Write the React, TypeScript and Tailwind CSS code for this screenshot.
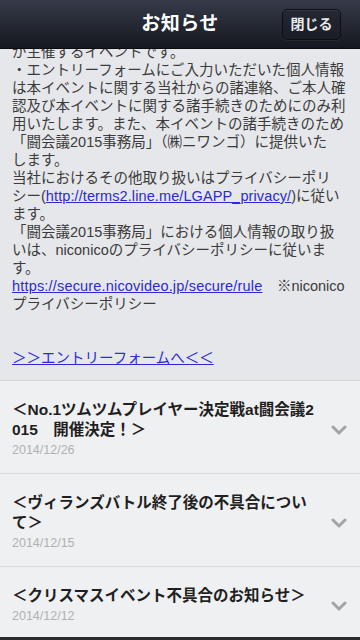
import React from 'react';

const jp = { fontFamily: '"Liberation Sans", "Noto Sans CJK JP", sans-serif' };

const bodyLines: React.ReactNode[] = [
  'が主催するイベントです。',
  '・エントリーフォームにご入力いただいた個人情報',
  'は本イベントに関する当社からの諸連絡、ご本人確',
  '認及び本イベントに関する諸手続きのためにのみ利',
  '用いたします。また、本イベントの諸手続きのため',
  '「闘会議2015事務局」（㈱ニワンゴ）に提供いた',
  'します。',
  '当社におけるその他取り扱いはプライバシーポリ',
  <>
    シー(<span className="text-[#2b2bd6] underline tracking-[0.1px]">http://terms2.line.me/LGAPP_privacy/</span>)に従い
  </>,
  'ます。',
  '「闘会議2015事務局」における個人情報の取り扱',
  'いは、niconicoのプライバシーポリシーに従いま',
  'す。',
  <>
    <span className="text-[#2b2bd6] underline tracking-[0.18px]">https://secure.nicovideo.jp/secure/rule</span>
    {'\u3000※niconico'}
  </>,
  'プライバシーポリシー',
  '\u00a0',
  '\u00a0',
  <span className="text-[#2b2bd6] underline">＞＞エントリーフォームへ＜＜</span>,
];

const notices = [
  { lines: ['＜No.1ツムツムプレイヤー決定戦at闘会議2', '015\u3000開催決定！＞'], date: '2014/12/26' },
  { lines: ['＜ヴィランズバトル終了後の不具合につい', 'て＞'], date: '2014/12/15' },
  { lines: ['＜クリスマスイベント不具合のお知らせ＞'], date: '2014/12/12' },
];

function Chevron() {
  return (
    <svg width="16" height="10" viewBox="0 0 16 10" className="shrink-0">
      <path d="M2 2 L8 8 L14 2" fill="none" stroke="#a3a4a7" strokeWidth="3" strokeLinecap="round" strokeLinejoin="round" />
    </svg>
  );
}

export default function App() {
  return (
    <div className="w-[360px] h-[640px] flex flex-col overflow-hidden bg-[#eff0f2]" style={jp}>
      <header className="h-[49px] shrink-0 relative z-10 flex items-center justify-center bg-gradient-to-b from-[#363b49] to-[#15181f] border-b border-[#0a0b0e]">
        <h1 className="text-[19px] font-bold text-white tracking-[0.5px]">お知らせ</h1>
        <button className="absolute right-[19px] top-[9px] w-[59px] h-[31px] rounded-[5px] bg-gradient-to-b from-[#242833] to-[#1a1d26] border border-[#0c0e12] shadow-[inset_0_1px_0_rgba(255,255,255,0.08),0_1px_0_rgba(255,255,255,0.06)] text-[14px] font-bold text-[#ececec]">
          閉じる
        </button>
      </header>

      <main className="flex-1 overflow-hidden">
        <section className="bg-[#e6e7ea] px-3 pb-[13px] border-b border-[#d4d6d9]">
          <div className="-mt-[6px] text-[14.5px] leading-[18px] text-[#3b3b3b] whitespace-nowrap">
            {bodyLines.map((line, i) => (
              <div key={i}>{line}</div>
            ))}
          </div>
        </section>

        {notices.map((n) => (
          <div key={n.date} className="flex items-center pl-3 pr-[13px] pt-[19px] pb-[13px] border-b border-[#d8dadd]">
            <div className="flex-1">
              <div className="text-[15.5px] leading-[20px] font-bold text-[#1f1f1f] whitespace-nowrap">
                {n.lines.map((l) => (
                  <div key={l}>{l}</div>
                ))}
              </div>
              <div className="text-[12.5px] leading-[20px] text-[#b0b1b3]">{n.date}</div>
            </div>
            <Chevron />
          </div>
        ))}
      </main>

      <div className="h-[3px] shrink-0 bg-[#2b2c30]" />
    </div>
  );
}
